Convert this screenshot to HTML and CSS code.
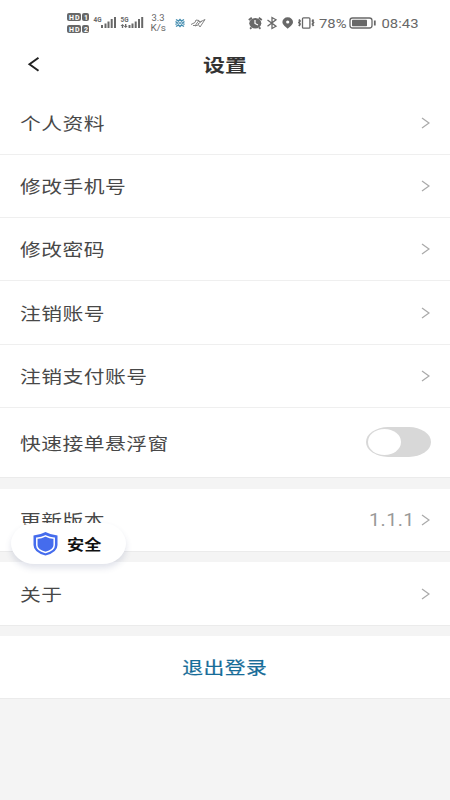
FILE: index.html
```html
<!DOCTYPE html>
<html lang="zh-CN">
<head>
<meta charset="utf-8">
<title>设置</title>
<link rel="stylesheet" href="styles.css">
</head>
<body>
<main class="screen">
  <header class="status">
    <svg class="status-left" width="145" height="28" viewBox="65 8 145 28">
      <g class="ink">
        <rect x="67" y="13" width="14" height="8" rx="2"/><rect x="82" y="13" width="7" height="8" rx="2"/>
        <rect x="67" y="25" width="14" height="8" rx="2"/><rect x="82" y="25" width="7" height="8" rx="2"/>
        <path d="M101 25h2v3h-2zM104.500 23.500h2v4.500h-2zM107.500 21.500h2v6.500h-2zM110.700 19h2v9h-2zM114 17h2v11h-2z"/>
        <path d="M128.500 25h2v3h-2zM131.500 23.500h2v4.500h-2zM134.700 21.500h2v6.500h-2zM138 19h2v9h-2zM141.200 17h2v11h-2z"/>
        <path d="M122.500 24l2 2h-1.300v2h-1.400v-2h-1.300zM125.700 28l-2-2h1.300v-2h1.400v2h1.300z"/>
      </g>
      <g class="badge-text">
        <text x="69" y="19.700" textLength="10.500">HD</text><text x="84" y="19.700">1</text>
        <text x="69" y="31.700" textLength="10.500">HD</text><text x="84" y="31.700">2</text>
      </g>
      <text class="net" x="93.500" y="22" textLength="8" lengthAdjust="spacingAndGlyphs">4G</text>
      <text class="net" x="120.500" y="22" textLength="8" lengthAdjust="spacingAndGlyphs">5G</text>
      <text class="speed" x="151.500" y="21.300" textLength="13" lengthAdjust="spacingAndGlyphs">3.3</text>
      <text class="speed" x="150.500" y="30.700" textLength="15.500" lengthAdjust="spacingAndGlyphs">K/s</text>
      <g class="flower"><path d="M176 19.500l2.500 1.500 1.500-1.500 1.500 1.500 2.500-1.500M176 26.500l2.500-1.500 1.500 1.500 1.500-1.500 2.500 1.500M175.500 21.500l2 1.500-2 1.500M184.500 21.500l-2 1.500 2 1.500"/><path d="M178.500 23h3"/></g>
      <path class="bird" d="M191 24.500l4-2 1-2.500 3 .5-2 2.500-2 3 3-1M198 20l2 2 5-2.500-3 4.500-2 3-2-3 4-3M193 25.500h3"/>
    </svg>
    <svg class="status-right" width="175" height="28" viewBox="245 8 175 28">
      <g class="ink"><ellipse cx="255.300" cy="23.200" rx="6" ry="5.200"/><path d="M287.700 28.700c-2-2-5.300-3.800-5.300-6.700a5.300 4.700 0 0 1 10.600 0c0 2.900-3.300 4.700-5.300 6.700z"/></g>
      <path class="alarm" d="M248.800 20l3-2.300M261.800 20l-3-2.300M251.500 27.500l-1.500 1.200M259 27.500l1.500 1.200"/>
      <path class="cut" d="M255 20v3.500l3 1.500"/><circle cx="287.700" cy="22" r="1.600" fill="#fff"/>
      <path class="line" d="M267.500 20l8.500 6.200-4 2.300V17.500l4 2.300-8.500 6.400"/>
      <path class="line" d="M303.500 17.800h5.400q1 0 1 1v8.400q0 1-1 1h-5.400q-1 0-1-1v-8.400q0-1 1-1z"/><path class="alarm" d="M299 19.500l1 1.500-1 1.500 1 1.500-1 2M313.500 19.500l-1 1.500 1 1.500-1 1.500 1 2"/>
      <text class="clock" x="319" y="27.500" textLength="27.500" lengthAdjust="spacingAndGlyphs">78%</text>
      <rect class="line" x="350" y="18" width="22" height="10" rx="2.500"/><rect class="ink" x="352" y="19.700" width="15" height="6.600" rx=".7"/><path class="alarm" d="M374.800 20.500v5"/>
      <text class="clock" x="381.500" y="27.500" textLength="37" lengthAdjust="spacingAndGlyphs">08:43</text>
    </svg>
  </header>
  <nav class="nav">
    <svg class="back" width="14" height="18" viewBox="0 0 14 18"><path d="M11.500 2.700L2.500 9.300l9 6.500"/></svg>
    <h1 class="title">设置</h1>
  </nav>
  <section class="group">
    <div class="row first"><span class="label">个人资料</span><svg class="arrow" viewBox="0 0 9 12"><path d="M1 1l7 5-7 5"/></svg></div>
    <div class="row"><span class="label">修改手机号</span><svg class="arrow" viewBox="0 0 9 12"><path d="M1 1l7 5-7 5"/></svg></div>
    <div class="row"><span class="label">修改密码</span><svg class="arrow" viewBox="0 0 9 12"><path d="M1 1l7 5-7 5"/></svg></div>
    <div class="row tall"><span class="label">注销账号</span><svg class="arrow" viewBox="0 0 9 12"><path d="M1 1l7 5-7 5"/></svg></div>
    <div class="row"><span class="label">注销支付账号</span><svg class="arrow" viewBox="0 0 9 12"><path d="M1 1l7 5-7 5"/></svg></div>
    <div class="row switch-row"><span class="label">快速接单悬浮窗</span><span class="switch"><span class="knob"></span></span></div>
  </section>
  <section class="group version">
    <div class="row"><span class="label">更新版本</span><span class="value">1.1.1</span><svg class="arrow" viewBox="0 0 9 12"><path d="M1 1l7 5-7 5"/></svg></div>
    <div class="safety">
      <svg width="25" height="24" viewBox="0 0 25 24"><path fill="#456ced" d="M12.500 0Q18 3 24.500 3.500V13q0 7.500-12 10.500Q.5 20.500.5 13V3.500Q7 3 12.500 0z"/><path fill="#456ced" stroke="#fff" stroke-width="1.500" d="M12.500 3.800q4 2 8.700 2.400v7q0 5-8.700 7.300-8.700-2.300-8.700-7.300v-7q4.700-.4 8.700-2.400z"/></svg>
      <span class="safety-text">安全</span>
    </div>
  </section>
  <section class="group about">
    <div class="row"><span class="label">关于</span><svg class="arrow" viewBox="0 0 9 12"><path d="M1 1l7 5-7 5"/></svg></div>
  </section>
  <section class="group logout"><span class="logout-text">退出登录</span></section>
</main>
</body>
</html>
```
FILE: styles.css
```css
* { box-sizing: border-box; }
body { margin: 0; background: #f4f4f4; font-family: "Noto Sans CJK SC", sans-serif; }
.screen { width: 450px; height: 800px; overflow: hidden; background: #f4f4f4; }
.status { height: 40px; padding: 8px 30px 0 65px; display: flex; justify-content: space-between; background: #fff; }
.status text { font-family: Roboto, sans-serif; fill: #686868; }
.ink { fill: #686868; }
.line { fill: none; stroke: #686868; stroke-width: 1.3; }
.alarm { fill: none; stroke: #686868; stroke-width: 1.8; }
.cut { fill: none; stroke: #fff; stroke-width: 1.2; }
.status .badge-text text { font-size: 7px; font-weight: 700; fill: #fff; }
.status .net { font-size: 7.5px; font-weight: 700; }
.status .speed { font-size: 8.5px; }
.status .clock { font-size: 12.5px; }
.flower { fill: none; stroke: #438caf; stroke-width: 1.4; }
.bird { fill: none; stroke: #858585; stroke-width: 1; }
.nav { height: 52px; display: flex; align-items: center; justify-content: center; background: #fff; padding: 0 27px; }
.back { flex: none; margin-bottom: 4px; }
.back path { fill: none; stroke: #222; stroke-width: 2; }
.title { flex: 1; margin: 0 14px 4px 0; text-align: center; font-size: 18px; line-height: 26px; font-weight: 700; color: #333; transform: scaleX(1.22); }
.group { background: #fff; border-bottom: 1px solid #ebebeb; }
.row { height: 63px; padding: 0 20px; display: flex; align-items: center; border-bottom: 1px solid #efefef; }
.row.tall { height: 64px; }
.row:last-child { border-bottom: 0; }
.label { margin-right: auto; font-size: 17px; line-height: 26px; letter-spacing: .4px; color: #484848; white-space: nowrap; transform: scaleX(1.222); transform-origin: left center; }
.arrow { width: 9px; height: 12px; flex: none; }
.arrow path { fill: none; stroke: #aaa; stroke-width: 1.3; }
.switch-row { height: 69px; padding-right: 19px; }
.switch { width: 65px; height: 30px; margin-bottom: 2px; padding: 2px; border-radius: 22px / 15px; background: #d8d8d8; }
.knob { display: block; width: 33px; height: 26px; border-radius: 50%; background: #fff; }
.version { position: relative; margin-top: 11px; }
.version .row { height: 62px; border-bottom: 0; }
.value { margin-right: 6px; font-family: Roboto, sans-serif; font-size: 17.5px; color: #999; letter-spacing: .4px; transform: scaleX(1.12); transform-origin: right center; }
.safety { position: absolute; left: 11px; top: 34px; width: 115px; height: 41px; padding: 0 22px; display: flex; align-items: center; gap: 9px; border-radius: 24px / 21px; background: #fff; box-shadow: 0 4px 6px rgba(70, 80, 130, .16); }
.safety svg { flex: none; }
.safety-text { font-size: 14.3px; line-height: 22px; font-weight: 700; color: #111; white-space: nowrap; transform: scaleX(1.2); transform-origin: left center; }
.about { margin-top: 10px; }
.about .row { height: 63px; }
.logout { margin-top: 10px; height: 63px; display: flex; align-items: center; justify-content: center; }
.logout-text { font-size: 17px; line-height: 26px; letter-spacing: .4px; font-weight: 400; color: #176c98; -webkit-text-stroke: .2px #176c98; transform: scaleX(1.222); }
```
